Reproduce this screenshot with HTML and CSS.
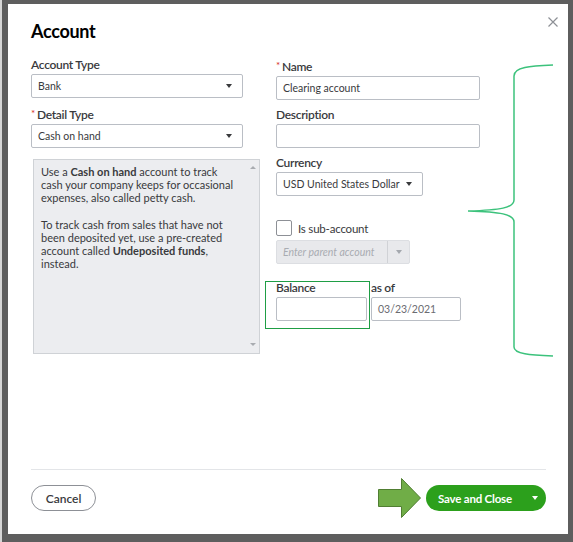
FILE: index.html
```html
<!DOCTYPE html>
<html lang="en">
<head>
<meta charset="utf-8">
<title>Account</title>
<link rel="stylesheet" href="styles.css">
</head>
<body>
<div class="modal">
  <header class="modal-head">
    <h1 class="title">Account</h1>
    <button class="close" type="button" aria-label="Close">
      <svg width="10" height="10" viewBox="0 0 10 10"><path d="M0.5 0.5 L9.5 9.5 M9.5 0.5 L0.5 9.5" stroke="#8d9096" stroke-width="1.2" fill="none"/></svg>
    </button>
  </header>

  <div class="form">
    <div class="col">
      <label class="lbl">Account Type</label>
      <div class="select w-full"><span class="val">Bank</span><i class="caret"></i></div>
      <label class="lbl"><span class="req">*</span>Detail Type</label>
      <div class="select w-full"><span class="val">Cash on hand</span><i class="caret"></i></div>
      <div class="help">
        <div class="help-text">
          <p>Use a <b>Cash on hand</b> account to track cash your company keeps for occasional expenses, also called petty cash.</p>
          <p>To track cash from sales that have not been deposited yet, use a pre-created account called <b>Undeposited funds</b>, instead.</p>
        </div>
        <div class="scrollbar"><i class="sc-up"></i><i class="sc-down"></i></div>
      </div>
    </div>

    <div class="col">
      <label class="lbl"><span class="req">*</span>Name</label>
      <div class="input w-name"><span class="val">Clearing account</span></div>
      <label class="lbl">Description</label>
      <div class="input w-name"></div>
      <label class="lbl">Currency</label>
      <div class="select w-cur"><span class="val">USD United States Dollar</span><i class="caret"></i></div>

      <div class="check-row">
        <span class="checkbox"></span>
        <span class="check-label">Is sub-account</span>
      </div>
      <div class="parent-select">
        <span class="ph">Enter parent account</span>
        <span class="ps-btn"><i class="caret caret-dim"></i></span>
      </div>

      <div class="balance-row">
        <div class="field w-bal">
          <label class="lbl">Balance</label>
          <div class="input"></div>
        </div>
        <div class="field w-date">
          <label class="lbl">as of</label>
          <div class="input"><span class="val date">03/23/2021</span></div>
        </div>
      </div>
    </div>
  </div>

  <footer class="modal-foot">
    <button class="btn-cancel" type="button">Cancel</button>
    <div class="btn-save">
      <span class="save-label">Save and Close</span>
      <i class="caret caret-white"></i>
    </div>
  </footer>

  <!-- callouts drawn over the form -->
  <div class="mark-box"></div>
  <svg class="mark-brace" width="100" height="302" viewBox="0 0 100 302">
    <path d="M95,7 C72,8 56,9 56,18 L56,142 C56,150 42,152 10,153 C42,154 56,156 56,164 L56,289 C56,296 72,297 95,298" fill="none" stroke="#3cc27c" stroke-width="1.5"/>
  </svg>
  <svg class="mark-arrow" width="44" height="40" viewBox="0 0 44 40">
    <path d="M0.5,11.5 H23.5 V0.5 L42.5,20 L23.5,39.5 V28.5 H0.5 Z" fill="#70ad47" stroke="#507e32" stroke-width="1"/>
  </svg>
</div>
</body>
</html>
```

FILE: styles.css
```css
html {
  background: #5e5e5e;
}

body {
  margin: 0;
  min-height: 542px;
  border-left: 2px solid #d6d6d6;
  font-family: Lato, "Open Sans", "Liberation Sans", sans-serif;
  color: #393a3d;
}

.modal {
  position: relative;
  box-sizing: border-box;
  width: 560px;
  height: 530px;
  margin: 4px 0 0 6px;
  background: #fff;
  display: flex;
  flex-direction: column;
}

.modal-head {
  display: flex;
  justify-content: space-between;
  align-items: flex-start;
  padding: 13px 10px 0 23px;
}

.title {
  margin: 2px 0 0;
  font-size: 18px;
  line-height: 24px;
  font-weight: 700;
  letter-spacing: -0.3px;
  color: #000;
}

.close {
  margin: 0;
  padding: 0;
  border: 0;
  background: none;
  width: 10px;
  height: 10px;
  line-height: 0;
}

.form {
  display: grid;
  grid-template-columns: 212px 1fr;
  column-gap: 33px;
  padding: 0 23px;
  margin-top: 14px;
}

.col {
  display: flex;
  flex-direction: column;
  align-items: flex-start;
}

.lbl {
  display: block;
  font-size: 12px;
  line-height: 16px;
  font-weight: 600;
  letter-spacing: -0.3px;
  color: #393a3d;
  margin-bottom: 1px;
}

.req {
  color: #d52b1e;
  font-size: 10px;
  font-weight: 400;
  vertical-align: 2px;
  margin-right: 2px;
}

.select,
.input {
  box-sizing: border-box;
  height: 24px;
  border: 1px solid #babec5;
  border-radius: 2px;
  background: #fff;
  display: flex;
  align-items: center;
  justify-content: space-between;
  padding: 0 10px 0 6px;
  margin-bottom: 7px;
}

.val {
  font-size: 10.5px;
  color: #393a3d;
}

.date {
  color: #6b6c72;
}

.w-full { width: 212px; }
.w-name { width: 204px; }
.w-cur { width: 147px; }

.caret {
  display: block;
  width: 0;
  height: 0;
  border-left: 3.5px solid transparent;
  border-right: 3.5px solid transparent;
  border-top: 4px solid #393a3d;
}

.caret-dim { border-top-color: #a4a8ae; }
.caret-white { border-top-color: #fff; }

.help {
  box-sizing: border-box;
  width: 227px;
  height: 195px;
  margin: 4px 0 0 2px;
  border: 1px solid #cfd2d6;
  background: #ecedf0;
  display: flex;
}

.help-text {
  flex: 1;
  padding: 6px 8px 0 7px;
  font-size: 11px;
  line-height: 12.8px;
  color: #393a3d;
}

.help-text p {
  margin: 0 0 15px;
}

.help-text b {
  font-weight: 700;
}

.scrollbar {
  width: 13px;
  display: flex;
  flex-direction: column;
  justify-content: space-between;
  align-items: center;
  padding: 6px 0 7px;
}

.sc-up,
.sc-down {
  display: block;
  width: 0;
  height: 0;
  border-left: 3px solid transparent;
  border-right: 3px solid transparent;
}

.sc-up { border-bottom: 3px solid #a8abb0; }
.sc-down { border-top: 3px solid #a8abb0; }

.check-row {
  display: flex;
  align-items: center;
  gap: 6px;
  margin-top: 17px;
}

.checkbox {
  box-sizing: border-box;
  width: 16px;
  height: 16px;
  border: 1px solid #8d9096;
  border-radius: 2px;
  background: #fff;
}

.check-label {
  font-size: 11.5px;
  letter-spacing: -0.2px;
  color: #393a3d;
}

.parent-select {
  box-sizing: border-box;
  width: 134px;
  height: 24px;
  margin-top: 4px;
  border: 1px solid #dcdee2;
  border-radius: 2px;
  background: #e8e9ec;
  display: flex;
  align-items: stretch;
}

.ph {
  flex: 1;
  display: flex;
  align-items: center;
  padding-left: 6px;
  font-size: 10.5px;
  font-style: italic;
  color: #a9acb2;
  border-right: 1px solid #d0d2d6;
}

.ps-btn {
  width: 21px;
  display: flex;
  align-items: center;
  justify-content: center;
}

.balance-row {
  display: flex;
  gap: 4px;
  margin-top: 16px;
}

.field .input {
  margin-bottom: 0;
}

.w-bal { width: 91px; }
.w-date { width: 90px; }

.modal-foot {
  margin: auto 22px 0 23px;
  border-top: 1px solid #e3e5e8;
  padding: 15px 0 23px;
  display: flex;
  justify-content: space-between;
  align-items: center;
}

.btn-cancel {
  box-sizing: border-box;
  width: 65px;
  height: 26px;
  border: 1px solid #8d9096;
  border-radius: 13px;
  background: #fff;
  font-family: inherit;
  font-size: 12px;
  font-weight: 600;
  color: #393a3d;
  padding: 0;
}

.btn-save {
  box-sizing: border-box;
  width: 120px;
  height: 26px;
  border-radius: 13px;
  background: #2ca01c;
  display: flex;
  align-items: center;
  justify-content: space-between;
  padding: 0 8px 0 12px;
}

.save-label {
  font-size: 11.5px;
  font-weight: 700;
  letter-spacing: -0.2px;
  color: #fff;
}

.mark-box {
  position: absolute;
  left: 257px;
  top: 277px;
  width: 103px;
  height: 46px;
  border: 1px solid #1f9e45;
}

.mark-brace {
  position: absolute;
  left: 450px;
  top: 54px;
}

.mark-arrow {
  position: absolute;
  left: 370px;
  top: 474px;
}
```
